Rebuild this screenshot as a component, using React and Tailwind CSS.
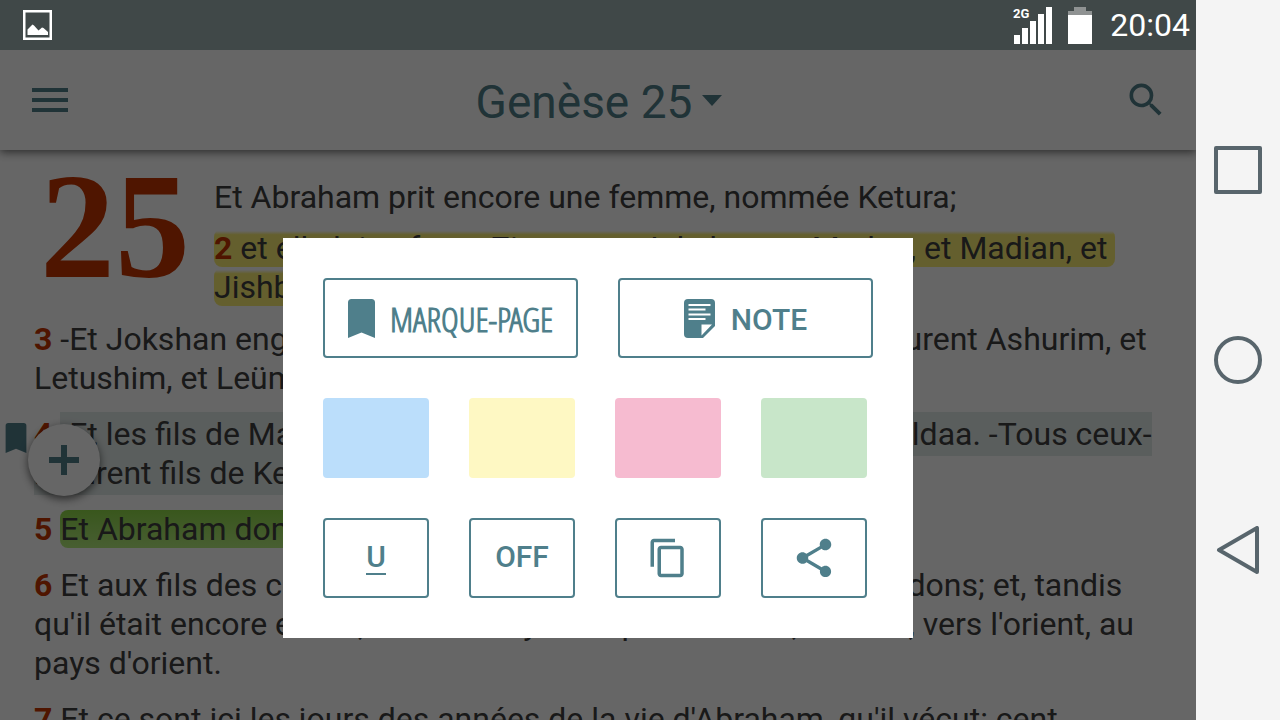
// App.jsx (Bible reader, verse actions dialog)
import { useState } from 'react';
import { MdContentCopy, MdMenu, MdSearch, MdShare } from 'react-icons/md';

const verses = [
    { number: 3, text: '-Et Jokshan engendra Sheba et Dedan. Et les fils de Dedan furent Ashurim, et Letushim, et Leümmim.' },
    { number: 4, text: '-Et les fils de Madian: Épha, et Épher, et Hénoc, et Abida, et Eldaa. -Tous ceux-là furent fils de Ketura.', mark: 'selected' },
    { number: 5, text: 'Et Abraham donna tout ce qui était à lui à Isaac.', mark: 'green' },
    { number: 6, text: "Et aux fils des concubines qu'eut Abraham, Abraham fit des dons; et, tandis qu'il était encore en vie, il les renvoya d'auprès d'Isaac, son fils, vers l'orient, au pays d'orient." },
    { number: 7, text: "Et ce sont ici les jours des années de la vie d'Abraham, qu'il vécut: cent soixante-quinze ans." },
];

const marks = {
    selected: 'bg-[#e2eae9] py-[3px] box-decoration-clone',
    green: 'rounded-lg bg-linear-to-b from-[#8fd848] to-[#b4ec7c]',
    yellow: 'rounded-lg bg-linear-to-b from-transparent from-5% via-[#fbee74] via-15% to-[#fbee74] to-90% pr-2 box-decoration-clone',
};

const swatches = [
    { name: 'Bleu', color: 'bg-[#bbdefb]' },
    { name: 'Jaune', color: 'bg-[#fef8c3]' },
    { name: 'Rose', color: 'bg-[#f6bbd0]' },
    { name: 'Vert', color: 'bg-[#c8e6c9]' },
];

const outlineButton =
    'flex h-20 items-center justify-center rounded-[4px] border-2 border-[#4f7f8b] text-[30px] leading-none font-medium text-[#4f7f8b]';

const BookmarkIcon = ({ className }) => (
    <svg viewBox="0 0 27 39" className={className} fill="currentColor" aria-hidden="true">
        <path d="M3.500 0h20A3.500 3.500 0 0 1 27 3.500V39l-13.500-5.500L0 39V3.500A3.500 3.500 0 0 1 3.500 0z" />
    </svg>
);

const NoteIcon = () => (
    <svg viewBox="0 0 31 39" className="h-[39px] w-[31px]" fill="currentColor" aria-hidden="true">
        <path d="M4 0h23a4 4 0 0 1 4 4v23L19 39H4a4 4 0 0 1-4-4V4a4 4 0 0 1 4-4z" />
        <path d="M4.500 6h22M4.500 10.500h17M4.500 15.500h22M4.500 20h17" stroke="#fff" strokeWidth="2" />
        <path d="M17.500 25.500h10.500L17.500 36.500z" fill="#fff" />
    </svg>
);

const StatusBar = () => (
    <div className="flex h-[50px] shrink-0 items-center bg-[#404848] pr-1.5 pl-[23px] text-white">
        <svg viewBox="0 0 29 30" className="h-[30px] w-[29px]" aria-hidden="true">
            <rect x="1.250" y="1.250" width="26.500" height="27.500" fill="none" stroke="#fff" strokeWidth="2.500" />
            <path d="M4.500 25v-5.500l5-5 1.500 1 4.500 5 3.500-3 1.500.5 4.500 4V25z" fill="#fff" />
        </svg>
        <svg viewBox="0 0 40 37" className="ml-auto h-[37px] w-10 overflow-visible" fill="#fff" aria-label="2G">
            <text x="0" y="11" fontSize="13" fontWeight="700">2G</text>
            <path d="M1 28h6v9H1zM9 21h6v16H9zM17 14h6v23h-6zM25 7h6v30h-6zM33 0h6v37h-6z" />
        </svg>
        <svg viewBox="0 0 24 37" className="ml-[15px] h-[37px] w-6" aria-hidden="true">
            <path d="M6 0h12v4h6v4H0V4h6z" fill="#8f9292" />
            <path d="M0 8h24v29H0z" fill="#fff" />
        </svg>
        <span className="ml-[18px] text-[32px] leading-none">20:04</span>
    </div>
);

const Verse = ({ number, text, mark }) => (
    <p>
        <b className="text-[#c63500]">{number}</b> <span className={mark ? marks[mark] : ''}>{text}</span>
    </p>
);

const ActionsDialog = ({ onClose }) => (
    <div className="absolute inset-0 flex items-center justify-center bg-black/60 pt-[106px]">
        <div role="dialog" aria-label="Actions" className="flex w-[630px] flex-col gap-10 bg-white p-10">
            <div className="grid grid-cols-2 gap-10">
                <button className={outlineButton} onClick={onClose}>
                    <BookmarkIcon className="mr-[15px] h-[39px] w-[27px]" />
                    <span className="pt-0.5 font-['Open_Sans_Condensed_Light','Open_Sans_Condensed','Noto_Sans',sans-serif] text-[34px] font-semibold">MARQUE-PAGE</span>
                </button>
                <button className={outlineButton} onClick={onClose}>
                    <NoteIcon />
                    <span className="ml-4 pt-1">NOTE</span>
                </button>
            </div>
            <div className="mr-1.5 grid grid-cols-4 gap-10">
                {swatches.map((swatch) => (
                    <button key={swatch.name} aria-label={swatch.name} className={`h-20 rounded-[4px] ${swatch.color}`} onClick={onClose} />
                ))}
            </div>
            <div className="mr-1.5 grid grid-cols-4 gap-10">
                <button className={outlineButton} onClick={onClose}>
                    <span className="border-b-2 pb-px">U</span>
                </button>
                <button className={outlineButton} onClick={onClose}>
                    <span className="pb-0.5">OFF</span>
                </button>
                <button className={outlineButton} aria-label="Copier" onClick={onClose}><MdContentCopy size={42} /></button>
                <button className={outlineButton} aria-label="Partager" onClick={onClose}><MdShare size={46} /></button>
            </div>
        </div>
    </div>
);

const NavigationBar = () => (
    <nav className="flex w-[84px] shrink-0 flex-col items-center justify-center gap-[142px] bg-[#f4f4f4] text-[#58656c]">
        <button aria-label="Applications récentes">
            <svg viewBox="0 0 48 48" className="size-12" fill="none" stroke="currentColor" strokeWidth="4" strokeLinejoin="round">
                <rect x="2" y="2" width="44" height="44" />
            </svg>
        </button>
        <button aria-label="Accueil">
            <svg viewBox="0 0 48 48" className="size-12" fill="none" stroke="currentColor" strokeWidth="4">
                <circle cx="24" cy="24" r="22" />
            </svg>
        </button>
        <button aria-label="Retour">
            <svg viewBox="0 0 48 48" className="size-12" fill="none" stroke="currentColor" strokeWidth="4" strokeLinejoin="round">
                <path d="M43 2v44L5 24z" />
            </svg>
        </button>
    </nav>
);

const App = () => {
    const [isDialogOpen, setIsDialogOpen] = useState(true);

    return (
        <div className="flex h-screen font-[Roboto,sans-serif]">
            <div className="flex min-w-0 flex-1 flex-col">
                <StatusBar />
                <div className="relative flex min-h-0 flex-1 flex-col overflow-hidden bg-white">
                    <header className="z-0 flex h-[100px] shrink-0 items-center justify-between bg-white pr-7 pl-[26px] text-[#507f8b] shadow-[0_2px_9px_rgba(0,0,0,0.6)]">
                        <button aria-label="Menu"><MdMenu size={48} /></button>
                        <button className="flex items-center gap-2.5 text-[46px] leading-none">
                            <span className="pt-1">Genèse 25</span>
                            <svg viewBox="0 0 20 11" className="h-[11px] w-5" fill="currentColor" aria-hidden="true">
                                <path d="M0 0h20L10 11z" />
                            </svg>
                        </button>
                        <button aria-label="Rechercher"><MdSearch size={44} /></button>
                    </header>

                    <main className="relative flex-1 px-[34px] pt-7 text-[32px] leading-[39px] text-[#404040]">
                        <div className="flex">
                            <h1 className="w-[180px] shrink-0 pl-1.5 font-['Liberation_Serif',serif] text-[150px] leading-[96px] font-bold text-[#c63500]">25</h1>
                            <div>
                                <p>Et Abraham prit encore une femme, nommée Ketura;</p>
                                <p className="mt-3">
                                    <span className={marks.yellow}>
                                        <b className="text-[#c63500]">2</b> et elle lui enfanta Zimran, et Jokshan, et Medan, et Madian, et Jishbak, et Shuakh.
                                    </span>
                                </p>
                            </div>
                        </div>
                        <div className="mt-[13px] flex flex-col gap-[17px]">
                            {verses.map((verse) => (
                                <Verse key={verse.number} {...verse} />
                            ))}
                        </div>

                        <BookmarkIcon className="absolute top-[273px] left-[5px] h-[30px] w-[22px] text-[#507f8b]" />
                        <button
                            aria-label="Ajouter"
                            className="absolute top-[274px] left-7 flex size-[72px] items-center justify-center rounded-full bg-white text-[#507f8b] shadow-[0_3px_8px_rgba(0,0,0,0.6)]"
                            onClick={() => setIsDialogOpen(true)}
                        >
                            <svg viewBox="0 0 30 30" className="size-[30px]" stroke="currentColor" strokeWidth="6" aria-hidden="true">
                                <path d="M15 0v30M0 15h30" />
                            </svg>
                        </button>
                    </main>

                    {isDialogOpen && <ActionsDialog onClose={() => setIsDialogOpen(false)} />}
                </div>
            </div>
            <NavigationBar />
        </div>
    );
};

export default App;
